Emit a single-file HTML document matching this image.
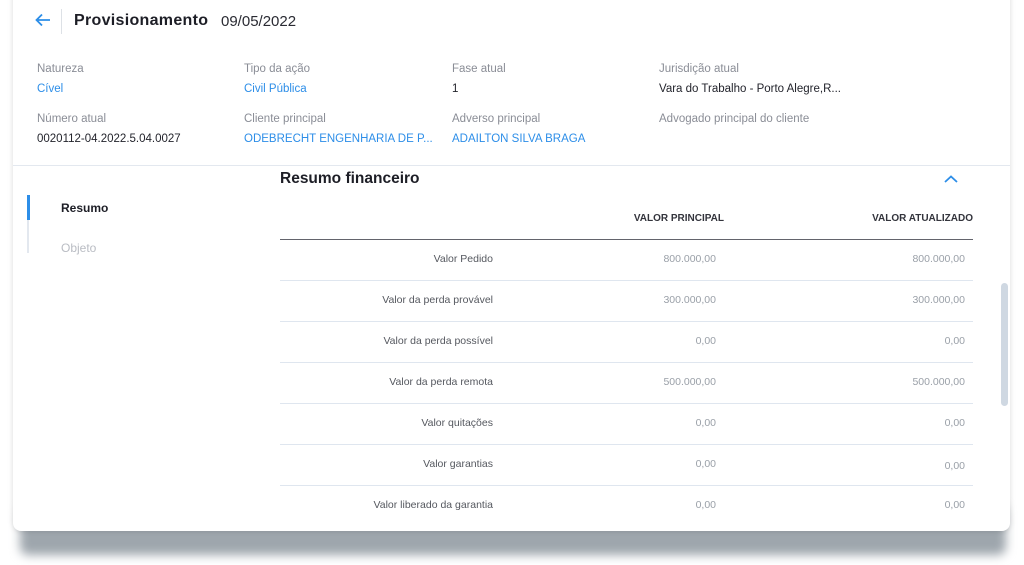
<!DOCTYPE html>
<html><head><meta charset="utf-8"><style>
*{margin:0;padding:0;box-sizing:border-box}
body{width:1024px;height:565px;background:#fff;font-family:"Liberation Sans",sans-serif;position:relative;overflow:hidden}
.shadow{position:absolute;left:20px;top:505px;width:986px;height:50px;background:#9ea6ad;border-radius:8px;filter:blur(5px)}
.card{position:absolute;left:13px;top:-10px;width:997px;height:541px;background:#fff;border-radius:8px;box-shadow:0 0 6px rgba(0,0,0,.15);overflow:hidden}
.a{position:absolute;white-space:nowrap}
.lbl{font-size:11.5px;color:#8a8d96}
.val{font-size:11.5px;color:#23242c}
.blue{color:#2d8ee8}
.row{position:absolute;left:280px;width:693px;height:1px;background:#dfe6ef}
.t{position:absolute;font-size:10.5px;color:#55585f;text-align:right;white-space:nowrap}
.n{position:absolute;font-size:10.5px;color:#9aa0a8;text-align:right;white-space:nowrap}
</style></head><body>
<div class="shadow"></div>
<div class="card"></div>
<svg class="a" style="left:35px;top:13px" width="16" height="14" viewBox="0 0 16 14"><path d="M15 7H2M7 1.5L1.5 7 7 12.5" fill="none" stroke="#2d8ee8" stroke-width="1.8"/></svg>
<div class="a" style="left:61px;top:9px;width:1px;height:25px;background:#dde1e6"></div>
<div class="a" style="left:74px;top:12px;font-size:16px;font-weight:bold;color:#1d1e26;letter-spacing:0.3px">Provisionamento</div>
<div class="a" style="left:221px;top:13px;font-size:15px;color:#2a2b33">09/05/2022</div>

<div class="a lbl" style="left:37px;top:63px">Natureza</div>
<div class="a val blue" style="left:37px;top:83px">Cível</div>
<div class="a lbl" style="left:244px;top:63px">Tipo da ação</div>
<div class="a val blue" style="left:244px;top:83px">Civil Pública</div>
<div class="a lbl" style="left:452px;top:63px">Fase atual</div>
<div class="a val" style="left:452px;top:83px">1</div>
<div class="a lbl" style="left:659px;top:63px">Jurisdição atual</div>
<div class="a val" style="left:659px;top:83px">Vara do Trabalho - Porto Alegre,R...</div>
<div class="a lbl" style="left:37px;top:113px">Número atual</div>
<div class="a val" style="left:37px;top:133px">0020112-04.2022.5.04.0027</div>
<div class="a lbl" style="left:244px;top:113px">Cliente principal</div>
<div class="a val blue" style="left:244px;top:133px">ODEBRECHT ENGENHARIA DE P...</div>
<div class="a lbl" style="left:452px;top:113px">Adverso principal</div>
<div class="a val blue" style="left:452px;top:133px">ADAILTON SILVA BRAGA</div>
<div class="a lbl" style="left:659px;top:113px">Advogado principal do cliente</div>

<div class="a" style="left:13px;top:165px;width:997px;height:1px;background:#e3e8ef"></div>
<div class="a" style="left:27px;top:195px;width:2px;height:58px;background:#e3e8ef"></div>
<div class="a" style="left:27px;top:195px;width:3px;height:25px;background:#2d8ee8"></div>
<div class="a" style="left:61px;top:201px;font-size:12px;font-weight:bold;color:#1d1e26">Resumo</div>
<div class="a" style="left:61px;top:241px;font-size:12px;color:#b9bcc3">Objeto</div>

<div class="a" style="left:280px;top:170px;font-size:15.5px;font-weight:bold;color:#1d1e26">Resumo financeiro</div>
<svg class="a" style="left:943px;top:174px" width="16" height="10" viewBox="0 0 16 10"><path d="M2 8L8 2.5 14 8" fill="none" stroke="#2d8ee8" stroke-width="1.8"/></svg>
<div class="t" style="left:600px;width:124px;top:213px;font-weight:bold;font-size:10px;color:#33343c">VALOR PRINCIPAL</div>
<div class="t" style="left:830px;width:143px;top:213px;font-weight:bold;font-size:10px;color:#33343c">VALOR ATUALIZADO</div>
<div class="a" style="left:280px;top:239px;width:693px;height:1px;background:#63646c"></div>
<div class="row" style="top:280px"></div><div class="row" style="top:321px"></div><div class="row" style="top:362px"></div><div class="row" style="top:403px"></div><div class="row" style="top:444px"></div><div class="row" style="top:485px"></div>

<div class="t" style="right:531px;top:253px">Valor Pedido</div><div class="n" style="right:308px;top:253px">800.000,00</div><div class="n" style="right:59px;top:253px">800.000,00</div>
<div class="t" style="right:531px;top:294px">Valor da perda provável</div><div class="n" style="right:308px;top:294px">300.000,00</div><div class="n" style="right:59px;top:294px">300.000,00</div>
<div class="t" style="right:531px;top:335px">Valor da perda possível</div><div class="n" style="right:308px;top:335px">0,00</div><div class="n" style="right:59px;top:335px">0,00</div>
<div class="t" style="right:531px;top:376px">Valor da perda remota</div><div class="n" style="right:308px;top:376px">500.000,00</div><div class="n" style="right:59px;top:376px">500.000,00</div>
<div class="t" style="right:531px;top:417px">Valor quitações</div><div class="n" style="right:308px;top:417px">0,00</div><div class="n" style="right:59px;top:417px">0,00</div>
<div class="t" style="right:531px;top:458px">Valor garantias</div><div class="n" style="right:308px;top:458px">0,00</div><div class="n" style="right:59px;top:460px">0,00</div>
<div class="t" style="right:531px;top:499px">Valor liberado da garantia</div><div class="n" style="right:308px;top:499px">0,00</div><div class="n" style="right:59px;top:499px">0,00</div>

<div class="a" style="left:1001px;top:283px;width:7px;height:123px;background:#cfd8e2;border-radius:4px"></div>
</body></html>
